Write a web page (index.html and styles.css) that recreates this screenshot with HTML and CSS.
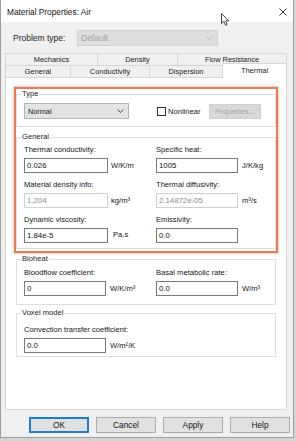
FILE: index.html
```html
<!DOCTYPE html>
<html>
<head>
<meta charset="utf-8">
<title>Material Properties: Air</title>
<link rel="stylesheet" href="styles.css">
</head>
<body>
<div class="window">
  <div class="titlebar">
    <span class="title">Material Properties: Air</span>
    <svg class="close" width="8" height="8" viewBox="0 0 8 8"><path d="M0.5 0.5 L7.5 7.5 M7.5 0.5 L0.5 7.5" stroke="#222" stroke-width="0.9" fill="none"/></svg>
  </div>
  <div class="body">
    <div class="problem-row">
      <span class="problem-label">Problem type:</span>
      <div class="combo combo-disabled">
        <span>Default</span>
        <svg class="chev" width="7" height="4" viewBox="0 0 7 4"><polyline points="0.5,0.5 3.5,3.5 6.5,0.5" fill="none" stroke="#b0b0b0" stroke-width="0.9"/></svg>
      </div>
    </div>
    <div class="tabs">
      <div class="tabrow">
        <div class="tab w92">Mechanics</div>
        <div class="tab w80">Density</div>
        <div class="tab w110">Flow Resistance</div>
      </div>
      <div class="tabrow">
        <div class="tab w65">General</div>
        <div class="tab w79">Conductivity</div>
        <div class="tab w73">Dispersion</div>
        <div class="tab w65 active">Thermal</div>
      </div>
    </div>
    <div class="panel">
      <div class="highlight">
        <fieldset class="group type-group">
          <legend>Type</legend>
          <div class="type-row">
            <div class="combo combo-normal">
              <span>Normal</span>
              <svg class="chev" width="7" height="4" viewBox="0 0 7 4"><polyline points="0.5,0.5 3.5,3.5 6.5,0.5" fill="none" stroke="#333" stroke-width="0.9"/></svg>
            </div>
            <div class="check-wrap">
              <span class="checkbox"></span>
              <span>Nonlinear</span>
            </div>
            <div class="btn btn-disabled">Properties...</div>
          </div>
        </fieldset>
        <fieldset class="group general-group">
          <legend>General</legend>
          <div class="grid">
            <div class="cell">
              <div class="lbl">Thermal conductivity:</div>
              <div class="field-row"><div class="input w84">0.026</div><span class="unit">W/K/m</span></div>
            </div>
            <div class="cell">
              <div class="lbl">Specific heat:</div>
              <div class="field-row"><div class="input w82">1005</div><span class="unit unit-r">J/K/kg</span></div>
            </div>
            <div class="cell">
              <div class="lbl">Material density info:</div>
              <div class="field-row"><div class="input w84 input-disabled">1.204</div><span class="unit">kg/m³</span></div>
            </div>
            <div class="cell">
              <div class="lbl">Thermal diffusivity:</div>
              <div class="field-row"><div class="input w82 input-disabled">2.14872e-05</div><span class="unit unit-r">m³/s</span></div>
            </div>
            <div class="cell">
              <div class="lbl">Dynamic viscosity:</div>
              <div class="field-row"><div class="input w84">1.84e-5</div><span class="unit unit-up">Pa.s</span></div>
            </div>
            <div class="cell">
              <div class="lbl">Emissivity:</div>
              <div class="field-row"><div class="input w82">0.0</div></div>
            </div>
          </div>
        </fieldset>
      </div>
      <fieldset class="group bioheat-group">
        <legend>Bioheat</legend>
        <div class="grid">
          <div class="cell">
            <div class="lbl">Bloodflow coefficient:</div>
            <div class="field-row"><div class="input w82">0</div><span class="unit unit-r">W/K/m³</span></div>
          </div>
          <div class="cell">
            <div class="lbl">Basal metabolic rate:</div>
            <div class="field-row"><div class="input w82">0.0</div><span class="unit unit-r">W/m³</span></div>
          </div>
        </div>
      </fieldset>
      <fieldset class="group voxel-group">
        <legend>Voxel model</legend>
        <div class="cell">
          <div class="lbl">Convection transfer coefficient:</div>
          <div class="field-row"><div class="input w82">0.0</div><span class="unit unit-r">W/m²/K</span></div>
        </div>
      </fieldset>
    </div>
    <div class="buttons">
      <div class="btn btn-main default">OK</div>
      <div class="btn btn-main">Cancel</div>
      <div class="btn btn-main">Apply</div>
      <div class="btn btn-main">Help</div>
    </div>
  </div>
  <svg class="cursor" width="9" height="13" viewBox="0 0 9 13"><path d="M0.5 0.5 V10.6 L2.9 8.4 L4.5 12.2 L6.1 11.5 L4.6 7.8 H7.9 Z" fill="#fff" stroke="#333" stroke-width="0.9" stroke-linejoin="round"/></svg>
</div>
</body>
</html>
```

FILE: styles.css
```css
* { box-sizing: border-box; }
html, body { margin: 0; padding: 0; }
body {
  width: 296px;
  height: 441px;
  overflow: hidden;
  background: #d4d4d4;
  font-family: "Liberation Sans", Arial, sans-serif;
  font-size: 7.6px;
  color: #151515;
}
.window {
  position: relative;
  width: 294px;
  height: 438px;
  border: 1px solid #9e9e9e;
  border-top: none;
  background: #f0f0f0;
  display: flex;
  flex-direction: column;
}
.titlebar {
  height: 22px;
  flex: none;
  background: #fff;
  display: flex;
  align-items: center;
  padding: 1px 0 0 6px;
  font-size: 8.3px;
  color: #111;
}
.close { margin-left: auto; margin-right: 6px; }
.body {
  flex: 1;
  padding: 8px 3px 4px 4px;
  display: flex;
  flex-direction: column;
}
.problem-row {
  display: flex;
  align-items: center;
  height: 16px;
  font-size: 8.5px;
}
.problem-label { margin-left: 8px; width: 64px; color: #222; }
.combo {
  display: flex;
  align-items: center;
  height: 16px;
  padding-left: 3px;
}
.combo .chev { margin-left: auto; margin-right: 4px; }
.combo-disabled {
  width: 141px;
  background: #dedede;
  border: 1px solid #d2d2d2;
  color: #a2a2a2;
}
.combo-normal {
  width: 105px;
  background: #e3e3e3;
  border: 1px solid #b4b4b4;
  font-size: 7.3px;
}
.tabs { margin-top: 7px; width: 282px; }
.tabrow { display: flex; height: 12px; }
.tab {
  height: 12px;
  border: 1px solid #d6d6d6;
  border-right: none;
  border-bottom: none;
  background: #f0f0f0;
  display: flex;
  align-items: center;
  justify-content: center;
  font-size: 7.4px;
  color: #1a1a1a;
}
.tab:last-child { border-right: 1px solid #d6d6d6; }
.tab.active {
  position: relative;
  z-index: 1;
  height: 15px;
  margin-top: -2px;
  background: #fff;
  padding-bottom: 2px;
}
.w92 { width: 92px; }
.w80 { width: 80px; }
.w110 { width: 110px; }
.w65 { width: 65px; }
.w79 { width: 79px; }
.w73 { width: 73px; }
.panel {
  width: 282px;
  height: 333px;
  flex: none;
  background: #fff;
  border: 1px solid #d6d6d6;
}
.highlight {
  margin: 9px 8px 0;
  border: 2px solid #ee7a4e;
  padding: 0 0 2px;
  box-shadow: 0 0 2px 1px rgba(0, 0, 0, 0.18);
}
fieldset.group {
  margin: 0;
  min-width: 0;
  border: 1px solid #dedede;
  padding: 4px 7px 7px;
}
fieldset.group legend {
  padding: 0 1px;
  margin-left: -3px;
  line-height: 10px;
  color: #1a1a1a;
}
fieldset.general-group { margin-top: 5px; padding: 3px 7px 5px; }
fieldset.bioheat-group { margin: 1px 10px 0; padding: 4px 7px 8px; }
fieldset.voxel-group { margin: 3px 10px 0; padding: 7px 7px 3px; }
.type-row {
  display: grid;
  grid-template-columns: 132px 53px 52px;
  align-items: center;
}
.check-wrap { display: flex; align-items: center; }
.checkbox {
  width: 9px;
  height: 9px;
  margin-left: 1px;
  margin-right: 2px;
  border: 1px solid #333;
  background: #fff;
}
.grid {
  display: grid;
  grid-template-columns: 132px 1fr;
  row-gap: 7px;
}
.lbl { line-height: 10px; margin-bottom: 3px; white-space: nowrap; }
.field-row { display: flex; align-items: center; }
.input {
  height: 15px;
  border: 1px solid #7a7a7a;
  background: #fff;
  padding: 0 2px;
  display: flex;
  align-items: center;
  font-size: 7.8px;
  color: #111;
}
.input-disabled { border-color: #cfcfcf; color: #8c8c8c; }
.w84 { width: 84px; }
.w82 { width: 82px; }
.unit { margin-left: 3px; }
.unit-r { margin-left: 4px; }
.unit-up { margin-left: 5px; margin-top: -3px; }
.btn {
  display: flex;
  align-items: center;
  justify-content: center;
  background: #e1e1e1;
  border: 1px solid #adadad;
}
.btn-disabled {
  height: 15px;
  background: #d8d8d8;
  border-color: #cfcfcf;
  color: #a6a6a6;
  font-size: 7.4px;
}
.buttons {
  display: flex;
  justify-content: flex-end;
  gap: 7px;
  margin-top: 7px;
}
.btn-main { width: 60px; height: 16px; font-size: 8.3px; color: #111; }
.btn-main.default { border: 2px solid #1a7fd4; }
.cursor { position: absolute; left: 220px; top: 13px; }
```
